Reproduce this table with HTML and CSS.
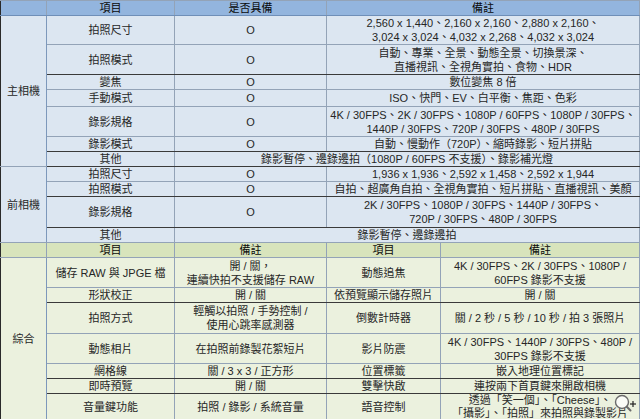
FILE: index.html
```html
<!DOCTYPE html>
<html lang="zh-Hant">
<head>
<meta charset="utf-8">
<title>相機規格</title>
<link rel="stylesheet" href="styles.css">
</head>
<body>
<div class="wrap">
<table class="spec">
  <colgroup>
    <col class="c0"><col class="c1"><col class="c2"><col class="c3"><col class="c4">
  </colgroup>
  <tbody class="blue">
    <tr class="h15 head">
      <td></td><td>項目</td><td>是否具備</td><td colspan="2">備註</td>
    </tr>
    <tr class="h29">
      <td rowspan="7" class="grp">主相機</td>
      <td>拍照尺寸</td><td class="o">O</td>
      <td colspan="2">2,560 x 1,440、2,160 x 2,160、2,880 x 2,160、<br>3,024 x 3,024、4,032 x 2,268、4,032 x 3,024</td>
    </tr>
    <tr class="h30 dk">
      <td>拍照模式</td><td class="o">O</td>
      <td colspan="2">自動、專業、全景、動態全景、切換景深、<br>直播視訊、全視角實拍、食物、HDR</td>
    </tr>
    <tr class="h14">
      <td>變焦</td><td class="o">O</td><td colspan="2">數位變焦 8 倍</td>
    </tr>
    <tr class="h17">
      <td>手動模式</td><td class="o">O</td><td colspan="2">ISO、快門、EV、白平衡、焦距、色彩</td>
    </tr>
    <tr class="h30">
      <td>錄影規格</td><td class="o">O</td>
      <td colspan="2">4K / 30FPS、2K / 30FPS、1080P / 60FPS、1080P / 30FPS、<br>1440P / 30FPS、720P / 30FPS、480P / 30FPS</td>
    </tr>
    <tr class="h15 dk">
      <td>錄影模式</td><td class="o">O</td><td colspan="2">自動、慢動作（720P）、縮時錄影、短片拼貼</td>
    </tr>
    <tr class="h15 dk">
      <td>其他</td><td colspan="3">錄影暫停、邊錄邊拍（1080P / 60FPS 不支援）、錄影補光燈</td>
    </tr>
    <tr class="h15">
      <td rowspan="4" class="grp">前相機</td>
      <td>拍照尺寸</td><td class="o">O</td><td colspan="2">1,936 x 1,936、2,592 x 1,458、2,592 x 1,944</td>
    </tr>
    <tr class="h14 dk">
      <td>拍照模式</td><td class="o">O</td><td colspan="2">自拍、超廣角自拍、全視角實拍、短片拼貼、直播視訊、美顏</td>
    </tr>
    <tr class="h31 dk">
      <td>錄影規格</td><td class="o">O</td>
      <td colspan="2">2K / 30FPS、1080P / 30FPS、1440P / 30FPS、<br>720P / 30FPS、480P / 30FPS</td>
    </tr>
    <tr class="h14">
      <td>其他</td><td colspan="3">錄影暫停、邊錄邊拍</td>
    </tr>
  </tbody>
  <tbody class="green">
    <tr class="h15 head">
      <td></td><td>項目</td><td>備註</td><td>項目</td><td>備註</td>
    </tr>
    <tr class="h30">
      <td rowspan="7" class="grp">綜合</td>
      <td>儲存 RAW 與 JPGE 檔</td><td>開 / 關，<br>連續快拍不支援儲存 RAW</td>
      <td>動態追焦</td><td>4K / 30FPS、2K / 30FPS、1080P /<br>60FPS 錄影不支援</td>
    </tr>
    <tr class="h15 dk">
      <td>形狀校正</td><td>開 / 關</td><td>依預覽顯示儲存照片</td><td>開 / 關</td>
    </tr>
    <tr class="h31">
      <td>拍照方式</td><td>輕觸以拍照 / 手勢控制 /<br>使用心跳率感測器</td>
      <td>倒數計時器</td><td>關 / 2 秒 / 5 秒 / 10 秒 / 拍 3 張照片</td>
    </tr>
    <tr class="h30">
      <td>動態相片</td><td>在拍照前錄製花絮短片</td>
      <td>影片防震</td><td>4K / 30FPS、1440P / 30FPS、480P /<br>30FPS 錄影不支援</td>
    </tr>
    <tr class="h15 dk">
      <td>網格線</td><td>關 / 3 x 3 / 正方形</td><td>位置標籤</td><td>嵌入地理位置標記</td>
    </tr>
    <tr class="h15 dk">
      <td>即時預覽</td><td>開 / 關</td><td>雙擊快啟</td><td>連按兩下首頁鍵來開啟相機</td>
    </tr>
    <tr class="h27 tight">
      <td>音量鍵功能</td><td>拍照 / 錄影 / 系統音量</td>
      <td>語音控制</td><td>透過「笑一個」、「Cheese」、<br>「攝影」、「拍照」來拍照與錄製影片</td>
    </tr>
  </tbody>
</table>
<svg class="zoomicon" width="26" height="22" viewBox="0 0 26 22" aria-hidden="true">
  <circle cx="10" cy="9" r="6.5" fill="rgba(255,255,255,0.75)" stroke="#6b6b6b" stroke-width="1.4"/>
  <line x1="14.8" y1="13.8" x2="18.5" y2="17.5" stroke="#6b6b6b" stroke-width="2" stroke-linecap="round"/>
  <line x1="18" y1="11" x2="24" y2="11" stroke="#222" stroke-width="1.2"/>
  <line x1="21" y1="8" x2="21" y2="14" stroke="#222" stroke-width="1.2"/>
</svg>
</div>
</body>
</html>
```

FILE: styles.css
```css
html, body {
  margin: 0;
  padding: 0;
  background: #ffffff;
}

.wrap {
  position: relative;
  width: 640px;
  height: 419px;
  overflow: hidden;
}

.spec {
  border-collapse: collapse;
  table-layout: fixed;
  width: 639px;
  font-family: "Liberation Sans", "Noto Sans CJK TC", sans-serif;
  font-size: 11px;
  line-height: 14px;
  color: #262626;
  border: 1px solid #2a2a2a;
}

.c0 { width: 46px; }
.c1 { width: 128px; }
.c2 { width: 152px; }
.c3 { width: 114px; }
.c4 { width: 199px; }

.spec td {
  padding: 0;
  text-align: center;
  vertical-align: middle;
  border: 1px solid #93a3b7;
  white-space: nowrap;
  overflow: hidden;
}

.spec tr.dk td {
  border-bottom-color: #3a3a3a;
}

.spec td:first-child {
  border-left-color: #2a2a2a;
}

.spec td.grp {
  border-right-color: #7d98bb;
}

.blue td { background: #dce6f1; }
.blue .head td {
  background: #93b5de;
  font-weight: normal;
  color: #0a0a0a;
  border-bottom-color: #6f8fb8;
}

.green td { background: #ebf1de; }
.green .head td {
  background: #d8e4bc;
  font-weight: normal;
  color: #0a0a0a;
}

.o {
  font-family: "Liberation Sans", sans-serif;
}

.h14 { height: 14px; }
.h15 { height: 15px; }
.h17 { height: 17px; }
.h27 { height: 27px; }
.h29 { height: 29px; }
.h30 { height: 30px; }
.h31 { height: 31px; }

.spec tr.tight td {
  line-height: 13px;
}

.zoomicon {
  position: absolute;
  right: 2px;
  bottom: 4px;
}
```
